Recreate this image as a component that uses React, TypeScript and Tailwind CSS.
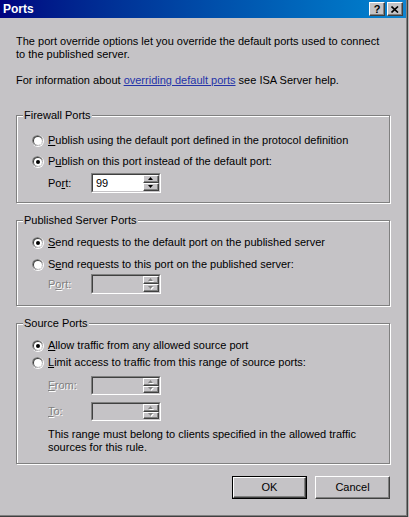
import React from 'react';

// classic 3D radio button
function Radio({ checked }: { checked?: boolean }) {
  return (
    <svg width="12" height="12" viewBox="0 0 12 12" className="shrink-0">
      <circle cx="6" cy="6" r="6" fill="#ffffff" />
      <circle cx="5.5" cy="5.5" r="5.5" fill="#808080" />
      <circle cx="6" cy="6" r="5" fill="#dcdadd" />
      <circle cx="5.6" cy="5.6" r="4.6" fill="#404040" />
      <circle cx="6" cy="6" r="4" fill="#ffffff" />
      {checked && <circle cx="6" cy="6" r="2" fill="#000000" />}
    </svg>
  );
}

function Arrow({ up, disabled }: { up?: boolean; disabled?: boolean }) {
  const d = up ? 'M0 3 L2.5 0 L5 3 Z' : 'M0 0 L5 0 L2.5 3 Z';
  return (
    <svg width="6" height="4" viewBox="0 0 6 4" className="overflow-visible">
      {disabled && <path d={d} fill="#ffffff" transform="translate(1 1)" />}
      <path d={d} fill={disabled ? '#808080' : '#000000'} />
    </svg>
  );
}

function SpinButton({ up, disabled }: { up?: boolean; disabled?: boolean }) {
  return (
    <div className="flex-1 flex items-center justify-center bg-[#c5c3c6] border border-t-white border-l-white border-b-[#404040] border-r-[#404040] shadow-[inset_-1px_-1px_0_#808080]">
      <Arrow up={up} disabled={disabled} />
    </div>
  );
}

function SpinEdit({ value, disabled, tall = true }: { value?: string; disabled?: boolean; tall?: boolean }) {
  return (
    <div
      className={`w-[70px] ${tall ? 'h-[20px]' : 'h-[19px]'} flex border border-t-[#808080] border-l-[#808080] border-b-white border-r-white`}
    >
      <div
        className={`flex-1 flex border border-t-[#404040] border-l-[#404040] border-b-[#c5c3c6] border-r-[#c5c3c6] ${
          disabled ? 'bg-[#c5c3c6]' : 'bg-white'
        }`}
      >
        <span className="flex-1 pl-[3px] flex items-center">{value}</span>
        <div className="w-[16px] flex flex-col">
          <SpinButton up disabled={disabled} />
          <SpinButton disabled={disabled} />
        </div>
      </div>
    </div>
  );
}

function Group({ title, className, children }: { title: string; className?: string; children: React.ReactNode }) {
  return (
    <div className={`relative border border-[#808080] shadow-[inset_1px_1px_0_#fff,1px_1px_0_#fff] ${className}`}>
      <span className="absolute -top-[7px] left-[6px] px-[1px] bg-[#c5c3c6]">{title}</span>
      {children}
    </div>
  );
}

function OptionRow({ checked, children, className }: { checked?: boolean; children: React.ReactNode; className?: string }) {
  return (
    <div className={`h-[13px] flex items-center gap-[4px] ${className ?? ''}`}>
      <Radio checked={checked} />
      <span className="whitespace-nowrap">{children}</span>
    </div>
  );
}

const dis = 'text-[#808080] [text-shadow:1px_1px_0_#ffffff]';

export default function App() {
  return (
    <div className="w-[409px] h-[517px] flex bg-[#b8b8b8] font-['Liberation_Sans',sans-serif] text-[11px] leading-[13px] text-black">
      <div className="w-[408px] h-[517px] flex border-r border-b border-[#404040]">
        <div className="flex-1 flex flex-col bg-[#c5c3c6] border-r border-b border-[#808080]">
          {/* title bar */}
          <div className="h-[18px] flex items-center pl-[3px] pr-[3px] bg-linear-to-r from-[#000080] to-[#1084d0]">
            <span className="flex-1 text-white font-bold text-[12px]">Ports</span>
            <div className="w-[16px] h-[14px] flex items-center justify-center bg-[#c5c3c6] border border-t-white border-l-white border-b-[#404040] border-r-[#404040] shadow-[inset_-1px_-1px_0_#808080] font-bold text-[11px] leading-none">
              ?
            </div>
            <div className="ml-[2px] w-[16px] h-[14px] flex items-center justify-center bg-[#c5c3c6] border border-t-white border-l-white border-b-[#404040] border-r-[#404040] shadow-[inset_-1px_-1px_0_#808080]">
              <svg width="8" height="7" viewBox="0 0 8 7">
                <path d="M0.5 0.5 L7 6.5 M7 0.5 L0.5 6.5" stroke="#000" strokeWidth="1.6" />
              </svg>
            </div>
          </div>

          {/* body */}
          <div className="flex flex-col pl-[16px] pr-[16px]">
            <p className="mt-[17px]">
              The port override options let you override the default ports used to connect
              <br />
              to the published server.
            </p>
            <p className="mt-[13px]">
              For information about{' '}
              <span className="text-[#2433a8] underline">overriding default ports</span> see ISA Server help.
            </p>

            <Group title="Firewall Ports" className="mt-[28px] w-[374px] pt-[18px] pb-[9px] pl-[15px]">
              <OptionRow>
                <u>P</u>ublish using the default port defined in the protocol definition
              </OptionRow>
              <OptionRow checked className="mt-[8px]">
                P<u>u</u>blish on this port instead of the default port:
              </OptionRow>
              <div className="mt-[5px] flex items-center pl-[16px]">
                <span className="w-[43px]">
                  Po<u>r</u>t:
                </span>
                <SpinEdit value="99" />
              </div>
            </Group>

            <Group title="Published Server Ports" className="mt-[17px] w-[374px] pt-[15px] pb-[11px] pl-[15px]">
              <OptionRow checked>
                <u>S</u>end requests to the default port on the published server
              </OptionRow>
              <OptionRow className="mt-[9px]">
                S<u>e</u>nd requests to this port on the published server:
              </OptionRow>
              <div className="mt-[3px] flex items-center pl-[16px]">
                <span className={`w-[43px] ${dis}`}>
                  P<u>o</u>rt:
                </span>
                <SpinEdit disabled />
              </div>
            </Group>

            <Group title="Source Ports" className="mt-[17px] w-[374px] pt-[15px] pb-[9px] pl-[15px]">
              <OptionRow checked>
                <u>A</u>llow traffic from any allowed source port
              </OptionRow>
              <OptionRow className="mt-[4px]">
                <u>L</u>imit access to traffic from this range of source ports:
              </OptionRow>
              <div className="mt-[7px] flex items-center pl-[16px]">
                <span className={`w-[43px] ${dis}`}>
                  <u>F</u>rom:
                </span>
                <SpinEdit disabled tall={false} />
              </div>
              <div className="mt-[7px] flex items-center pl-[16px]">
                <span className={`w-[43px] ${dis}`}>
                  <u>T</u>o:
                </span>
                <SpinEdit disabled tall={false} />
              </div>
              <p className="mt-[7px] pl-[16px]">
                This range must belong to clients specified in the allowed traffic
                <br />
                sources for this rule.
              </p>
            </Group>

            <div className="mt-[12px] w-[374px] flex justify-end gap-[8px]">
              <button className="w-[75px] h-[23px] border border-black">
                <div className="w-full h-full flex items-center justify-center border border-t-white border-l-white border-b-[#404040] border-r-[#404040] shadow-[inset_-1px_-1px_0_#808080]">
                  OK
                </div>
              </button>
              <button className="w-[75px] h-[23px] flex items-center justify-center border border-t-white border-l-white border-b-[#404040] border-r-[#404040] shadow-[inset_-1px_-1px_0_#808080]">
                Cancel
              </button>
            </div>
          </div>
        </div>
      </div>
    </div>
  );
}
